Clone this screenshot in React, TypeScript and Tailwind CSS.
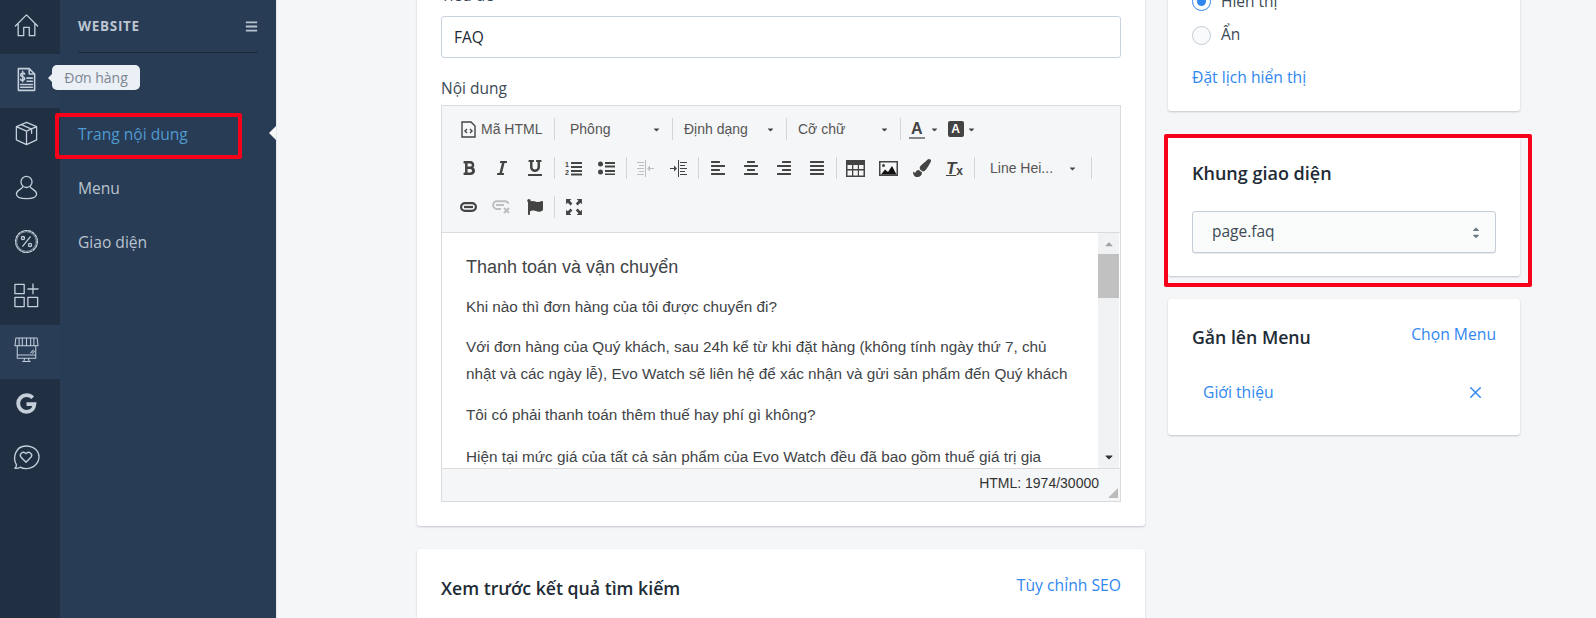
import type { ReactNode } from "react";
import {
  FaBold, FaItalic, FaUnderline, FaAlignLeft, FaAlignCenter, FaAlignRight, FaAlignJustify,
  FaPaintBrush, FaFlag, FaCaretDown, FaCaretUp, FaBars,
} from "react-icons/fa";
import { X } from "lucide-react";

const stroke = { fill: "none", stroke: "currentColor", strokeWidth: 1.4, strokeLinecap: "round", strokeLinejoin: "round" } as const;

const HomeIcon = () => (
  <svg width="25" height="25" viewBox="0 0 27 27" {...stroke}>
    <path d="M1.5 14 13.5 2l12 12M4.500 11.500V24.500h6V15.500h6V24.500h6V11.500" />
  </svg>
);
const OrderIcon = () => (
  <svg width="19" height="25" viewBox="0 0 21 27" {...stroke} strokeWidth={1.7}>
    <path d="M1.500 1.500h12l6 6v18h-18zM13.500 1.500v6h6M11 15.500h6M11 12h6M4 19h13M4 22h13" />
    <path d="M8.500 7.500C8 6 4 6 4 8.500s4.500 1.500 4.500 4S4 15 3.800 13.200M6.200 4.500v11.500" />
  </svg>
);
const BoxIcon = () => (
  <svg width="23" height="25" viewBox="0 0 25 27" {...stroke}>
    <path d="M12.500 1.500 23.500 6v14.500l-11 5-11-5V6zM1.500 6l11 5 11-5M12.500 11v14.500M7 3.800l11 5v4.500" />
  </svg>
);
const UserIcon = () => (
  <svg width="23" height="25" viewBox="0 0 25 27" {...stroke}>
    <circle cx="12.500" cy="7.500" r="6" />
    <path d="M8.500 12.500c-.5 3-7 3.500-7 8 0 3 4 5 11 5s11-2 11-5c0-4.500-6.500-5-7-8" />
  </svg>
);
const PercentIcon = () => (
  <svg width="25" height="25" viewBox="0 0 27 27" {...stroke}>
    <circle cx="13.500" cy="13.500" r="11.800" strokeDasharray="2.600 1.500" />
    <circle cx="13.500" cy="13.500" r="10.600" strokeWidth="0.700" />
    <path d="m17.500 8.500-8 10" />
    <circle cx="9.700" cy="9.800" r="1.700" />
    <circle cx="17.300" cy="17.200" r="1.700" />
  </svg>
);
const AppsIcon = () => (
  <svg width="25" height="25" viewBox="0 0 27 27" {...stroke}>
    <rect x="1" y="1.500" width="10" height="10" />
    <rect x="1" y="15.500" width="10" height="10" />
    <rect x="15" y="15.500" width="10.500" height="10" />
    <path d="M20.500 1v10.500M15 6.500h11" />
  </svg>
);
const StoreIcon = () => (
  <svg width="25" height="26" viewBox="0 0 27 28" {...stroke} strokeWidth={1.1}>
    <path d="M2 1h23l1 8.500H1zM5.500 1v8.500M9 1v8.500M13.500 1v8.500M18 1v8.500M21.500 1v8.500" />
    <path d="M3.500 9.500V23h20V9.500M3.500 19.500h20M9.500 26.500h8M11.500 23l-1 3.500M15.500 23l1 3.500M18 17l3-3M20 17.500l2-2" />
  </svg>
);
const ChatIcon = () => (
  <svg width="28" height="25" viewBox="0 0 29 26" {...stroke}>
    <path d="M4.500 20.500C.5 14 3 1 14.500 1 23 1 28 6.500 28 12.500S22.500 24.500 14.500 24.500c-2.500 0-4.500-.5-6-1.500-1.500 1.500-3.500 1.500-5.500 1.300 1-.8 1.600-2.300 1.500-3.800Z" />
    <path d="M14.500 18 9.200 12.500C7 9.500 11.500 5.500 14.500 9c3-3.500 7.500.5 5.300 3.500Z" />
  </svg>
);
const GoogleG = () => (
  <svg width="21" height="21" viewBox="0 0 22 22">
    <path fill="none" stroke="currentColor" strokeWidth="4" d="M17.500 5C15.800 3.300 13.500 2.300 11 2.300 6.200 2.300 2.300 6.200 2.300 11s3.900 8.700 8.700 8.700c4.800 0 8-3.200 8.300-8h-8.300" />
  </svg>
);

const railItems: { icon: ReactNode; active?: boolean }[] = [
  { icon: <HomeIcon /> },
  { icon: <OrderIcon />, active: true },
  { icon: <BoxIcon /> },
  { icon: <UserIcon /> },
  { icon: <PercentIcon /> },
  { icon: <AppsIcon /> },
  { icon: <StoreIcon />, active: true },
  { icon: <GoogleG /> },
  { icon: <ChatIcon /> },
];

const Rail = () => (
  <div className="w-[60px] shrink-0 bg-[#212f43] text-[#c4cfda]">
    {railItems.map((item, i) => (
      <div
        key={i}
        className={`h-[54.100px] flex items-center justify-center pr-[8px] pb-[4px] ${item.active ? "bg-[#293d57]" : ""}`}
      >
        {item.icon}
      </div>
    ))}
  </div>
);

const Sidebar = () => (
  <div className="relative w-[216px] shrink-0 bg-[#283c56] px-[18px] text-[15.600px] text-[#b9c3ce]">
    <div className="flex h-[53px] items-center justify-between border-b border-[#1d2a3b] pt-[1px]">
      <span className="text-[13.500px] font-bold tracking-[0.7px] text-[#bcc5d0]">WEBSITE</span>
      <FaBars className="w-[13px] h-[13px]" />
    </div>
    <div className="mt-[55px] flex flex-col">
      <div className="h-[54px] flex items-center text-[#4f9bd0]">Trang nội dung</div>
      <div className="h-[54px] flex items-center">Menu</div>
      <div className="h-[54px] flex items-center">Giao diện</div>
    </div>
    <span className="absolute right-0 top-[126px] border-y-[7px] border-r-[7px] border-y-transparent border-r-[#f4f6f8]" />
    <div className="absolute -left-[8px] top-[65px] flex h-[25px] w-[88px] items-center justify-center rounded-[5px] bg-[#ebeff6] text-[14px] text-[#7c8794]">
      <span className="absolute -left-[4px] border-y-[4px] border-r-[4px] border-y-transparent border-r-[#ebeff6]" />
      Đơn hàng
    </div>
    <div className="absolute -left-[5px] top-[113px] h-[46px] w-[187px] rounded-[2px] border-[4px] border-[#f70019]" />
  </div>
);

const Tool = ({ children, muted }: { children: ReactNode; muted?: boolean }) => (
  <div className={`w-[33px] h-[24px] flex items-center justify-center text-[16px] ${muted ? "text-[#bcbfc2]" : "text-[#444]"}`}>
    {children}
  </div>
);

const Sep = () => <div className="mx-[2.500px] h-[22px] w-px shrink-0 bg-[#d3d5d7]" />;

const Drop = ({ label, className }: { label: string; className: string }) => (
  <div className={`flex items-center justify-between text-[14px] text-[#555] ${className}`}>
    {label}
    <FaCaretDown className="w-[9px] h-[9px] text-[#444]" />
  </div>
);

const OlIcon = () => (
  <svg width="17" height="16" viewBox="0 0 17 16" fill="currentColor">
    <text x="0" y="7" fontSize="7" fontWeight="bold" fontFamily="Liberation Sans">1</text>
    <text x="0" y="15" fontSize="7" fontWeight="bold" fontFamily="Liberation Sans">2</text>
    <path d="M6 2h11v2H6zM6 6h11v2H6zM6 10h11v2H6zM6 13.500h11v2H6z" />
  </svg>
);
const UlIcon = () => (
  <svg width="17" height="14" viewBox="0 0 17 14" fill="currentColor">
    <circle cx="2.500" cy="3" r="2.500" />
    <circle cx="2.500" cy="11" r="2.500" />
    <path d="M7 1h10v2H7zM7 4.500h10v2H7zM7 9h10v2H7zM7 12.500h10v2H7z" />
  </svg>
);
const IndentIcon = ({ flip }: { flip?: boolean }) => (
  <svg width="17" height="17" viewBox="0 0 17 17" fill="currentColor" className={flip ? "-scale-x-100" : ""}>
    <path d="M8 0h1v17H8zM10 2h7v1h-7zM10 5h5v1h-5zM10 8h7v1h-7zM10 11h5v1h-5zM10 14h7v1h-7zM0 8h4V5.500L7 8.500l-3 3V9H0z" />
  </svg>
);
const TableIcon = () => (
  <svg width="19" height="17" viewBox="0 0 19 17">
    <path fill="#444" d="M0 0h19v17H0z" />
    <path fill="#f5f6f7" d="M1.500 5h4.500v4H1.500zM7.300 5h4.500v4H7.300zM13 5h4.500v4H13zM1.500 10.500h4.500v5H1.500zM7.300 10.500h4.500v5H7.300zM13 10.500h4.500v5H13z" />
  </svg>
);
const ImageIcon = () => (
  <svg width="19" height="15" viewBox="0 0 19 15">
    <path fill="#444" d="M0 0h19v15H0z" />
    <path fill="#f5f6f7" d="M1.500 1.500h16v12h-16z" />
    <circle cx="4.500" cy="4.500" r="1.500" fill="#444" />
    <path fill="#111" d="m2 13.500 4-5 3 2.500 4-6 4.500 8.500z" />
  </svg>
);
const ChainIcon = () => (
  <svg width="17" height="10" viewBox="0 0 17 10" fill="none" stroke="currentColor" strokeWidth="2.200">
    <rect x="1.100" y="1.100" width="14.800" height="7.800" rx="3.900" />
    <path d="M4 5h9" />
  </svg>
);
const UnlinkIcon = () => (
  <svg width="19" height="14" viewBox="0 0 19 14" fill="none" stroke="currentColor" strokeWidth="2">
    <path d="M9 9H5a3.900 3.900 0 0 1 0-7.800h8a3.900 3.900 0 0 1 3.500 2.500M4 5h8" />
    <path d="m12 8 5 5m0-5-5 5" />
  </svg>
);
const ExpandIcon = () => (
  <svg width="18" height="18" viewBox="0 0 17 17" fill="currentColor">
    <path d="M1 1h5L4.500 2.700 7 5.200 5.200 7 2.700 4.500 1 6zM16 1v5l-1.500-1.500L12 7l-1.800-1.800 2.500-2.500L11 1zM1 16v-5l1.700 1.500L5.200 10 7 11.800l-2.500 2.500L6 16zM16 16h-5l1.700-1.700-2.500-2.500L12 10l2.500 2.500L16 11z" />
  </svg>
);

const Editor = () => (
  <div className="h-[397px] flex flex-col border border-[#d9dbdd] font-['Liberation_Sans',sans-serif]">
    <div className="h-[127px] shrink-0 border-b border-[#d9dbdd] bg-[#f5f6f7] pl-[10px] pt-[11px] flex flex-col gap-[15px]">
      <div className="flex items-center h-[24px]">
        <div className="flex items-center gap-[5px] pl-[9px] w-[99px] text-[14px] text-[#555]">
          <svg width="15" height="17" viewBox="0 0 15 17" fill="none" stroke="#444" strokeWidth="1.400">
            <path d="M1 1h9l4 4v11H1z" />
            <path d="m6 8-2 2 2 2M9 8l2 2-2 2" />
          </svg>
          Mã HTML
        </div>
        <Sep />
        <Drop label="Phông" className="w-[112px] pl-[13px] pr-[8px]" />
        <Sep />
        <Drop label="Định dạng" className="w-[108px] pl-[9px] pr-[8px]" />
        <Sep />
        <Drop label="Cỡ chữ" className="w-[108px] pl-[9px] pr-[8px]" />
        <Sep />
        <div className="flex items-center gap-[5px] pl-[6px] text-[#444]">
          <span className="border-b-[2px] border-[#888] text-[16px] font-bold leading-[17px] px-[2px]">A</span>
          <FaCaretDown className="w-[9px] h-[9px] mr-[4px]" />
          <span className="w-[16px] h-[16px] rounded-[2px] bg-[#444] text-white text-[12px] font-bold flex items-center justify-center">A</span>
          <FaCaretDown className="w-[9px] h-[9px] -ml-[2px]" />
        </div>
      </div>
      <div className="flex items-center h-[24px]">
        <Tool><FaBold /></Tool>
        <Tool><FaItalic /></Tool>
        <Tool><FaUnderline /></Tool>
        <Sep />
        <Tool><OlIcon /></Tool>
        <Tool><UlIcon /></Tool>
        <Sep />
        <Tool muted><IndentIcon flip /></Tool>
        <Tool><IndentIcon /></Tool>
        <Sep />
        <Tool><FaAlignLeft /></Tool>
        <Tool><FaAlignCenter /></Tool>
        <Tool><FaAlignRight /></Tool>
        <Tool><FaAlignJustify /></Tool>
        <Sep />
        <Tool><TableIcon /></Tool>
        <Tool><ImageIcon /></Tool>
        <Tool><FaPaintBrush className="w-[18px] h-[18px]" /></Tool>
        <Tool>
          <span className="font-bold italic text-[17px] underline leading-none">T</span>
          <span className="text-[12px] font-bold mt-[6px]">x</span>
        </Tool>
        <Sep />
        <Drop label="Line Hei..." className="w-[111px] pl-[13px] pr-[11px]" />
        <Sep />
      </div>
      <div className="flex items-center h-[24px]">
        <Tool><ChainIcon /></Tool>
        <Tool muted><UnlinkIcon /></Tool>
        <Tool><FaFlag /></Tool>
        <Sep />
        <Tool><ExpandIcon /></Tool>
      </div>
    </div>
    <div className="flex-1 min-h-0 flex overflow-hidden bg-white">
      <div className="flex-1 pl-[24px] pr-[22px] pt-[18px] text-[15.300px] leading-[27px] text-[#3f4447]">
        <div className="text-[18px] leading-[32px]">Thanh toán và vận chuyển</div>
        <p className="mt-[10px]">Khi nào thì đơn hàng của tôi được chuyển đi?</p>
        <p className="mt-[13px]">
          Với đơn hàng của Quý khách, sau 24h kể từ khi đặt hàng (không tính ngày thứ 7, chủ nhật và các ngày lễ), Evo Watch sẽ liên hệ để xác nhận và gửi sản phẩm đến Quý khách
        </p>
        <p className="mt-[14px]">Tôi có phải thanh toán thêm thuế hay phí gì không?</p>
        <p className="mt-[15px]">Hiện tại mức giá của tất cả sản phẩm của Evo Watch đều đã bao gồm thuế giá trị gia</p>
      </div>
      <div className="w-[21px] mr-px shrink-0 bg-[#f1f2f3] flex flex-col items-center py-[5px]">
        <FaCaretUp className="w-[12px] h-[12px] text-[#a3a3a3]" />
        <div className="mt-[4px] h-[44px] w-full bg-[#c1c1c1]" />
        <FaCaretDown className="mt-auto w-[12px] h-[12px] text-[#333]" />
      </div>
    </div>
    <div className="relative h-[33px] shrink-0 border-t border-[#d9dbdd] bg-[#f5f6f7] pr-[21px] pt-[2px] text-right text-[14px] leading-[24px] text-[#333]">
      HTML: 1974/30000
      <span className="absolute right-[2px] bottom-[3px] border-l-[10px] border-b-[10px] border-l-transparent border-b-[#bbb]" />
    </div>
  </div>
);

const card = "rounded-[3px] bg-white shadow-[0_1px_2px_rgba(50,60,75,0.25)]";

const LeftColumn = () => (
  <div className="w-[728px] shrink-0">
    <div className={`${card} -mt-[40px] px-[24px] pt-[24px] pb-[24px]`}>
      <div className="h-[32px] text-[#3b4a55]">Tiêu đề</div>
      <div className="h-[42px] rounded-[3px] border border-[#c9d2df] px-[12px] pt-[1px] flex items-center text-[#212b36]">FAQ</div>
      <div className="mt-[17px] h-[30px] pb-[3px] flex items-center text-[#3b4a55]">Nội dung</div>
      <Editor />
    </div>
    <div className={`${card} mt-[23px] h-[120px] px-[24px] pt-[26px]`}>
      <div className="flex justify-between items-start">
        <h2 className="text-[17.700px] font-semibold leading-[26px] text-[#212b36]">Xem trước kết quả tìm kiếm</h2>
        <a className="text-[15.700px] leading-[20px] text-[#2f87f0]">Tùy chỉnh SEO</a>
      </div>
    </div>
  </div>
);

const RightColumn = () => (
  <div className="w-[352px] shrink-0">
    <div className={`${card} -mt-[40px] h-[151px] px-[24px] pt-[23px]`}>
      <div className="h-[37px] flex items-center gap-[10px] text-[#3b4a55]">
        <span className="w-[19px] h-[19px] rounded-full border border-[#2f87f0] bg-white flex items-center justify-center">
          <span className="w-[9px] h-[9px] rounded-full bg-[#2f87f0]" />
        </span>
        Hiển thị
      </div>
      <div className="mt-[3px] h-[24px] flex items-center gap-[10px] text-[#3b4a55]">
        <span className="w-[19px] h-[19px] rounded-full border border-[#c4cdd5] bg-[#f9fafb]" />
        Ẩn
      </div>
      <a className="mt-[19px] block text-[15.700px] leading-[22px] text-[#2f87f0]">Đặt lịch hiển thị</a>
    </div>
    <div className="relative mt-[26px]">
      <div className={`${card} h-[139px] px-[24px] pt-[23px]`}>
        <h2 className="text-[18px] font-semibold leading-[26px] text-[#212b36]">Khung giao diện</h2>
        <div className="mt-[25px] h-[42px] rounded-[3px] border border-[#c4cdd5] bg-[#fafbfb] pl-[19px] pr-[14px] flex items-center justify-between text-[#3b4a55] shadow-[0_1px_1px_rgba(50,60,75,0.1)]">
          page.faq
          <span className="flex flex-col text-[#6b7783]">
            <FaCaretUp className="w-[10px] h-[10px] -mb-[3px]" />
            <FaCaretDown className="w-[10px] h-[10px]" />
          </span>
        </div>
      </div>
      <div className="absolute -left-[4px] -right-[12px] -top-[3px] -bottom-[11px] rounded-[2px] border-[4px] border-[#f70019]" />
    </div>
    <div className={`${card} mt-[23px] h-[136px] px-[24px] pt-[23px]`}>
      <div className="flex justify-between items-start">
        <h2 className="text-[17.700px] font-semibold leading-[30px] text-[#212b36]">Gắn lên Menu</h2>
        <a className="mt-[1px] text-[15.700px] leading-[22px] text-[#2f87f0]">Chọn Menu</a>
      </div>
      <div className="mt-[29px] pl-[11px] pr-[11px] flex items-center justify-between text-[15.700px] text-[#2f87f0]">
        Giới thiệu
        <X className="w-[19px] h-[19px]" strokeWidth={1.800} />
      </div>
    </div>
  </div>
);

export default function App() {
  return (
    <div className="flex h-[618px] w-[1596px] overflow-hidden bg-[#f4f6f8] font-['Open_Sans','Noto_Sans',sans-serif] text-[15.500px]">
      <Rail />
      <Sidebar />
      <main className="flex-1 flex gap-[23px] border-l border-[#e4e7ec] pl-[140px]">
        <LeftColumn />
        <RightColumn />
      </main>
    </div>
  );
}
